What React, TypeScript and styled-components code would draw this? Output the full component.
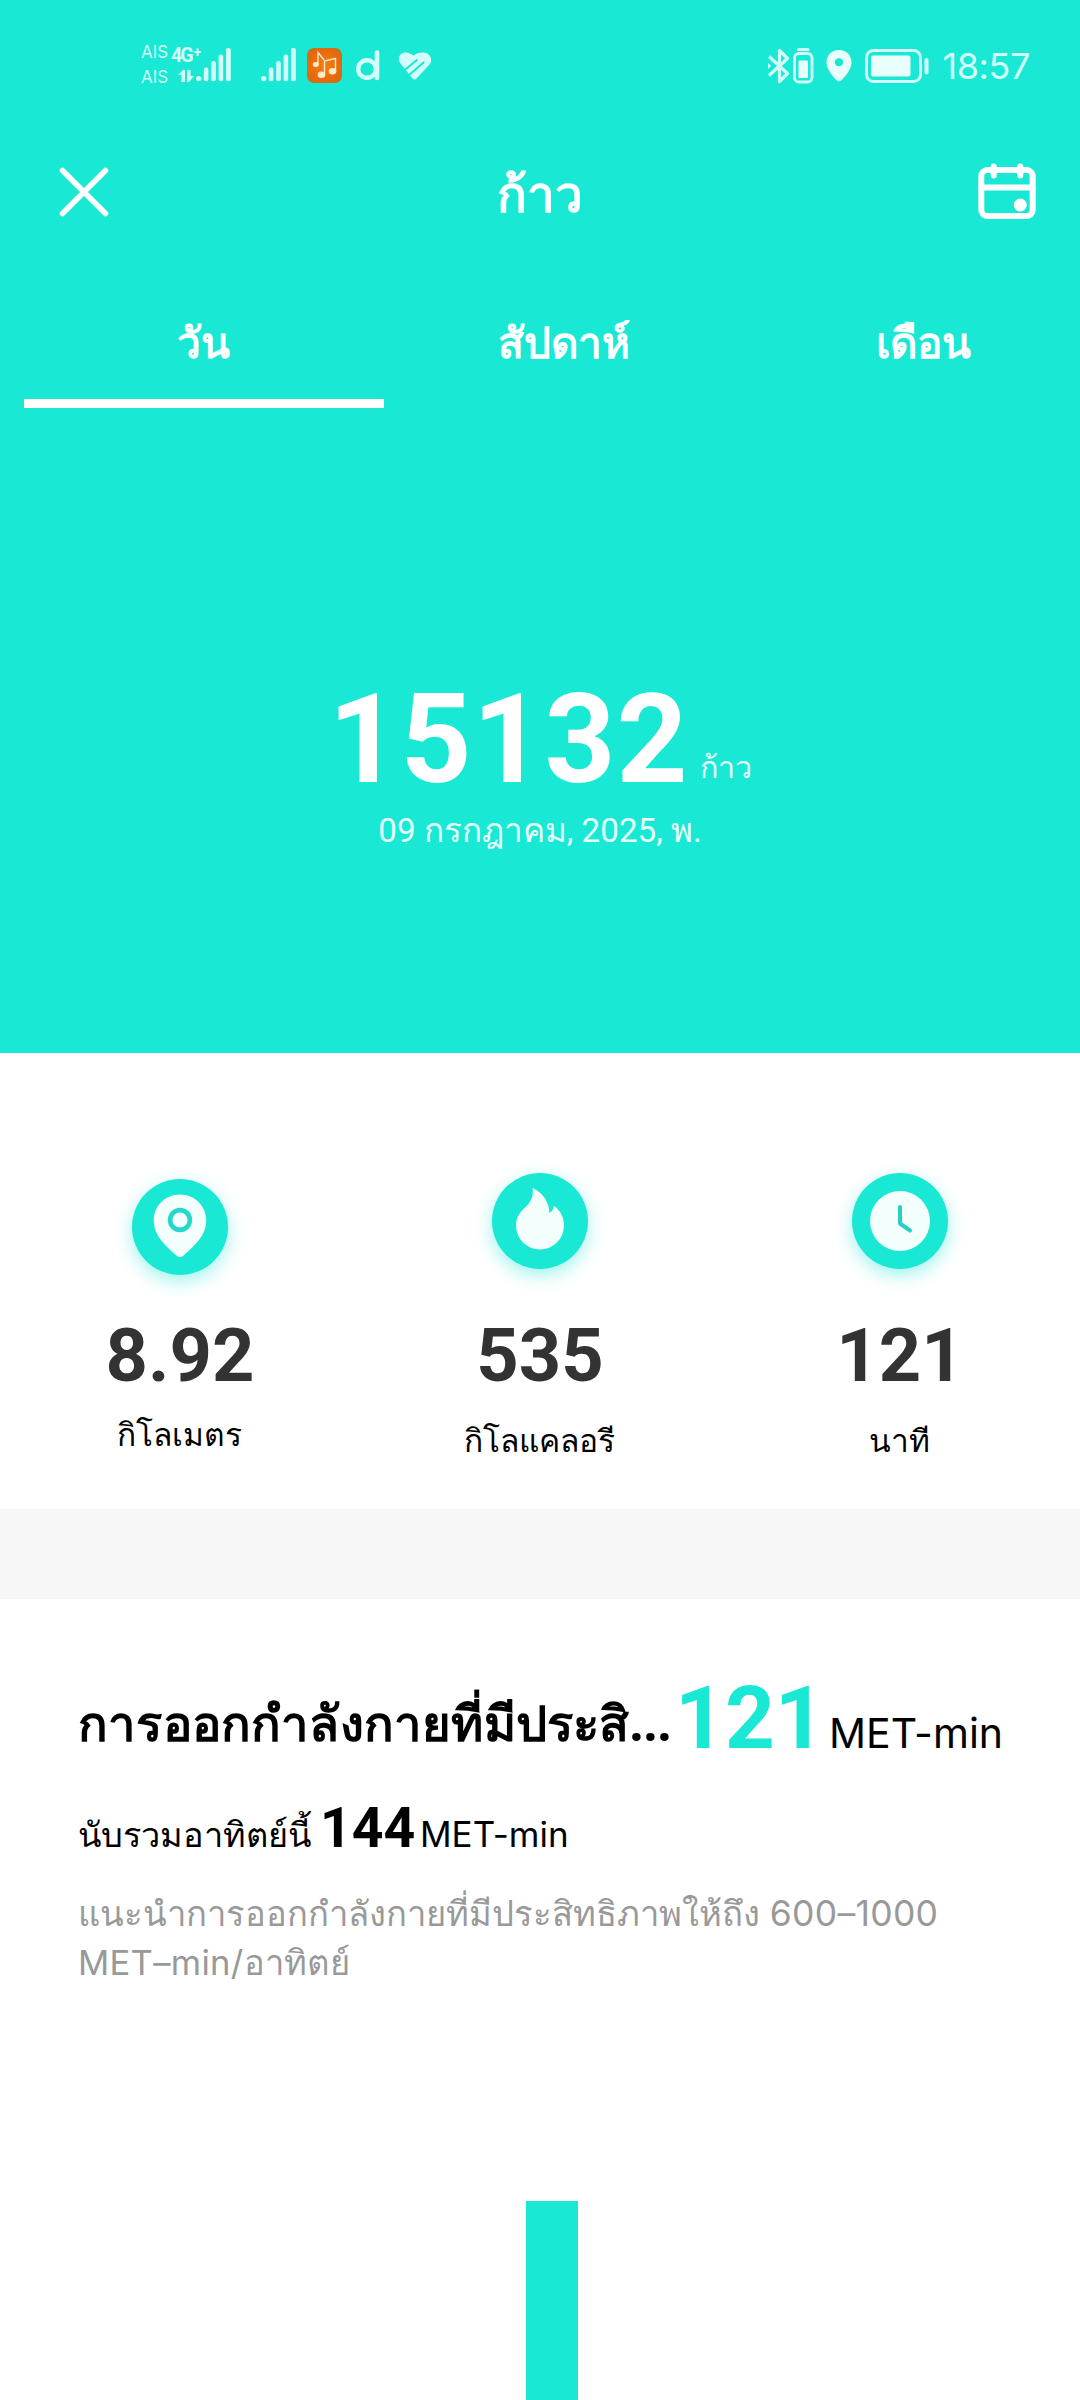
import React from 'react';
import styled, { createGlobalStyle } from 'styled-components';

const TEAL = '#18e8d4';
const THAI_BOLD = '"Noto Sans", sans-serif';
const NUMERIC = 'Roboto, sans-serif';
const BODY = 'Inter, sans-serif';

const GlobalStyle = createGlobalStyle`
  * { box-sizing: border-box; }
  body { margin: 0; background: #fff; }
  svg { display: block; flex: none; }
`;

const Screen = styled.main`
  display: flex;
  flex-direction: column;
  width: 1080px;
  height: 2400px;
  overflow: hidden;
  background: #fff;
  font-family: ${BODY};
  color: #000;
`;

const Hero = styled.section`
  display: flex;
  flex-direction: column;
  flex: none;
  height: 1053px;
  background: ${TEAL};
  color: #fff;
`;

/* ---------- status bar ---------- */

const StatusBar = styled.div`
  display: flex;
  justify-content: space-between;
  align-items: center;
  height: 131px;
  padding: 0 50px 0 141px;
  color: #d3fffa;
`;

const StatusGroup = styled.div`
  display: flex;
  align-items: center;
`;

const Carriers = styled.div`
  width: 30px;
  font-size: 17px;
  line-height: 25px;
  padding-bottom: 1px;
`;

const Network = styled.div`
  display: flex;
  flex-direction: column;
  width: 25px;
  height: 35px;
`;

const NetworkType = styled.div`
  display: flex;
  align-items: flex-start;
  font: 700 19.5px/16px Roboto, sans-serif;
  letter-spacing: -2px;
  white-space: nowrap;
`;

const NetworkPlus = styled.span`
  padding-left: 2px;
  font-size: 14px;
  line-height: 8px;
`;

const DataRow = styled.div`
  padding: 6px 0 0 7px;
`;

const Gap = styled.span<{ $w: number }>`
  flex: none;
  width: ${(p) => p.$w}px;
`;

const Clock = styled.time`
  font-size: 36px;
  line-height: 40px;
  letter-spacing: -0.4px;
`;

/* ---------- header and tabs ---------- */

const Header = styled.header`
  display: grid;
  grid-template-columns: 58px 1fr 58px;
  align-items: center;
  height: 123px;
  padding: 0 44px 0 58px;
`;

const Title = styled.h1`
  margin: 0;
  padding-right: 14px;
  text-align: center;
  font: 700 49.5px/64px ${THAI_BOLD};
`;

const Tabs = styled.nav`
  display: flex;
  flex: none;
  height: 154px;
  padding-left: 24px;
  overflow: hidden;
`;

const Tab = styled.div<{ $active?: boolean }>`
  flex: none;
  width: 360px;
  padding: 58px 1px 0 0;
  border-bottom: 9px solid ${(p) => (p.$active ? '#fff' : 'transparent')};
  text-align: center;
  font: 700 42.3px/60px ${THAI_BOLD};
`;

const StepCount = styled.div`
  display: flex;
  justify-content: center;
  align-items: flex-end;
  gap: 11px;
  margin-top: 267px;
`;

const StepNumber = styled.span`
  font: 700 123.8px/130px ${NUMERIC};
  letter-spacing: 1px;
`;

const StepUnit = styled.span`
  margin-bottom: 18px;
  font-size: 30.5px;
  line-height: 40px;
  color: #e2fffb;
`;

const DateLine = styled.div`
  margin-top: 4px;
  text-align: center;
  font: 400 33.2px/44px ${NUMERIC};
  color: #e2fffb;
`;

/* ---------- stats ---------- */

const Stats = styled.section`
  display: grid;
  grid-template-columns: repeat(3, 360px);
  flex: none;
  height: 456px;
`;

const Stat = styled.div<{ $shift: number }>`
  display: flex;
  flex-direction: column;
  align-items: center;
  padding-top: ${(p) => 120 + p.$shift}px;
`;

const Badge = styled.div`
  display: grid;
  place-items: center;
  width: 96px;
  height: 96px;
  border-radius: 50%;
  background: ${TEAL};
  box-shadow: 0 6px 18px rgba(24, 232, 212, 0.42);
`;

const StatValue = styled.div<{ $shift: number }>`
  margin-top: ${(p) => 47 - p.$shift}px;
  font: 700 74px/80px ${NUMERIC};
  color: #333;
`;

/* The distance label rides a few pixels above the other two. */
const StatLabel = styled.div<{ $shift: number }>`
  margin-top: ${(p) => 21 - p.$shift}px;
  padding-right: 1px;
  font-size: 31.7px;
  line-height: 48px;
`;

const Divider = styled.div`
  flex: none;
  height: 90px;
  background: #f7f7f7;
`;

/* ---------- effective exercise ---------- */

const Exercise = styled.section`
  display: flex;
  flex-direction: column;
  flex: 1;
  padding: 79px 76px 0 78px;
  white-space: nowrap;
`;

const ExerciseHead = styled.div`
  display: flex;
  align-items: flex-end;
`;

const ExerciseTitle = styled.h2`
  width: 597px;
  margin: 0 0 6px;
  font: 700 49px/60px ${THAI_BOLD};
  letter-spacing: 0.2px;
`;

const ExerciseValue = styled.span`
  width: 154px;
  font: 700 87px/80px ${NUMERIC};
  color: ${TEAL};
`;

const ExerciseUnit = styled.span`
  font-size: 41px;
  line-height: 50px;
`;

const WeekTotal = styled.div`
  display: flex;
  align-items: baseline;
  margin-top: 41px;
`;

const WeekLabel = styled.span`
  width: 242px;
  font-size: 34.3px;
  line-height: 40px;
`;

const WeekValue = styled.span`
  width: 100px;
  font: 700 55.3px/60px ${NUMERIC};
`;

const WeekUnit = styled.span`
  font-size: 35px;
  line-height: 40px;
`;

const Advice = styled.p`
  margin: 30px 0 0;
  font-size: 34.6px;
  line-height: 49px;
  color: #999;
`;

const AdviceRange = styled.span`
  font-size: 35.5px;
  line-height: 1;
  letter-spacing: 0.3px;
`;

const AdviceUnit = styled.span`
  letter-spacing: 0.3px;
`;

const Chart = styled.div`
  display: flex;
  flex: 1;
  align-items: flex-end;
  padding-left: 448px;
`;

const Bar = styled.div<{ $h: number }>`
  width: 52px;
  height: ${(p) => p.$h}px;
  background: ${TEAL};
`;

const CloseButton = styled.div`
  margin-top: -1px;
`;

const CalendarButton = styled.div`
  margin-top: -4px;
`;

/* ---------- icons ---------- */

const Signal = () => (
  <svg width="35" height="35" viewBox="0 0 35 35" fill="#d3fffa">
    <circle cx="2.7" cy="30.6" r="2.7" />
    <rect x="7.8" y="19.6" width="4.6" height="13.6" rx="2" />
    <rect x="15.2" y="13" width="4.6" height="20.2" rx="2" />
    <rect x="22.6" y="6.4" width="4.6" height="26.8" rx="2" />
    <rect x="30" y="0" width="4.8" height="33.2" rx="2" />
  </svg>
);

const DataArrows = () => (
  <svg width="16" height="12" viewBox="0 0 16 12" fill="#d3fffa">
    <path d="M0 5 5 0h2v12H3.500V5zM9 0h3.500v6H16l-5 6H9z" />
  </svg>
);

const MusicApp = () => (
  <svg width="35" height="35" viewBox="0 0 35 35">
    <defs>
      <radialGradient id="music" cx="50%" cy="50%" r="70%">
        <stop offset="0" stopColor="#f2800f" />
        <stop offset="0.65" stopColor="#e8680c" />
        <stop offset="1" stopColor="#b8741c" />
      </radialGradient>
    </defs>
    <rect width="35" height="35" rx="7" fill="url(#music)" />
    <g fill="#ffe9c9">
      <ellipse cx="8.800" cy="16.500" rx="3" ry="2.500" />
      <ellipse cx="14.500" cy="26.800" rx="3.800" ry="3.300" />
      <ellipse cx="25.500" cy="23.300" rx="3.800" ry="3.300" />
    </g>
    <path d="M11 16.500V4.500l6 7.500M17.500 26.500V13l11-2.500V23" fill="none" stroke="#ffe9c9" strokeWidth="1.400" />
  </svg>
);

const LetterLogo = () => (
  <svg width="25" height="31" viewBox="0 0 25 31" fill="none" stroke="#d3fffa">
    <circle cx="11" cy="19" r="8.800" strokeWidth="4.400" />
    <path d="M21 2.600v25.400" strokeWidth="4.600" strokeLinecap="round" />
  </svg>
);

const HeartLogo = () => (
  <svg width="34" height="28" viewBox="0 0 34 28" fill="none">
    <path
      d="M2.500 11.500C-1.500 6 2 .5 8 .5 11 .5 13.500 2 15.500 3.800 18 1.500 21 .5 25 .5 32 .5 35.500 7.500 31.500 12.500L18.500 26.500q-2 1.800-4 0z"
      fill="#d3fffa"
    />
    <path d="M6 18.500 19.500 7.500" stroke={TEAL} strokeWidth="2" />
    <path d="M10.500 23.500 25.500 10.500" stroke={TEAL} strokeWidth="2" strokeLinecap="round" />
  </svg>
);

const Bluetooth = () => (
  <svg width="22" height="36" viewBox="0 0 22 36" fill="none" stroke="#d3fffa" strokeWidth="3.200" strokeLinejoin="round">
    <path d="M1 8.500 19.500 25.500 11.500 33.500V2.500L19.500 10.500 1 27.500" />
    <path d="M0 15.500 2.500 18 0 20.500z" fill="#d3fffa" strokeWidth="1" />
  </svg>
);

const WatchBattery = () => (
  <svg width="21" height="36" viewBox="0 0 21 36">
    <path d="M5.500 1.500h9.500" stroke="#d3fffa" strokeWidth="3" strokeLinecap="round" />
    <rect x="1.500" y="5.500" width="17.500" height="28.500" rx="4.500" fill="none" stroke="#d3fffa" strokeWidth="2.800" />
    <rect x="5.500" y="12.500" width="9.500" height="17.500" rx="1" fill="#e8fffc" />
  </svg>
);

const StatusPin = () => (
  <svg width="26" height="32" viewBox="0 0 26 32">
    <path
      fill="#e8fffc"
      fillRule="evenodd"
      d="M13 0C5.600 0 .5 5.400.5 12.300.5 20.500 8 27.500 11 30.600q2 1.600 4 0C18 27.500 25.500 20.500 25.500 12.300 25.500 5.400 20.400 0 13 0zm0 8.200a4 4 0 1 1 0 8 4 4 0 0 1 0-8z"
    />
  </svg>
);

const Battery = () => (
  <svg width="64" height="34" viewBox="0 0 64 34">
    <rect x="1.500" y="1.500" width="54" height="31" rx="7" fill="none" stroke="#d3fffa" strokeWidth="3" />
    <rect x="6" y="6.500" width="39.500" height="21" rx="2" fill="#e8fffc" />
    <rect x="59.500" y="9" width="4" height="16.500" rx="2" fill="#d3fffa" />
  </svg>
);

const CloseIcon = () => (
  <svg width="52" height="52" viewBox="0 0 52 52" stroke="#fff" strokeWidth="5.500" strokeLinecap="round">
    <path d="M4.500 4.500 47.500 47.500M47.500 4.500 4.500 47.500" />
  </svg>
);

const CalendarIcon = () => (
  <svg width="58" height="58" viewBox="0 0 58 58" fill="none" stroke="#fff" strokeWidth="6" strokeLinecap="round">
    <rect x="3.300" y="8" width="51.400" height="46" rx="6" />
    <path d="M3.300 25.500h51.400M15.700 4.500v9M42.300 4.500v9" />
    <circle cx="42.300" cy="43" r="6.500" fill="#fff" stroke="none" />
  </svg>
);

const DistanceIcon = () => (
  <svg width="96" height="96" viewBox="0 0 96 96">
    <path
      d="M48 15.500C33.500 15.500 21.800 26.500 21.800 41.500 21.800 57 34 67 44.500 76.500q3.500 3 7 0C62 67 74.200 57 74.200 41.500 74.200 26.500 62.500 15.500 48 15.500z"
      fill="#f2fffd"
    />
    <circle cx="48" cy="41" r="9.900" fill="none" stroke="#26d8ca" strokeWidth="4.600" />
  </svg>
);

const FlameIcon = () => (
  <svg width="96" height="96" viewBox="0 0 96 96">
    <path
      d="M40.500 15C51 19.500 57 29 57.500 40q3.500-2 4.500-7.300C68.500 37.500 72 44.500 72 52.500A24 24 0 0 1 24 52.500C24 46 27 40 32 35.500 38.500 30 42 23.500 40.500 15z"
      fill="#f2fffd"
    />
  </svg>
);

const ClockIcon = () => (
  <svg width="96" height="96" viewBox="0 0 96 96">
    <circle cx="48" cy="48" r="30" fill="#f2fffd" />
    <path d="M48 34v16.500l10 7" fill="none" stroke="#26d0c2" strokeWidth="4" strokeLinecap="round" strokeLinejoin="round" />
  </svg>
);

const stats = [
  { value: '8.92', label: 'กิโลเมตร', icon: <DistanceIcon />, shift: 6 },
  { value: '535', label: 'กิโลแคลอรี', icon: <FlameIcon />, shift: 0 },
  { value: '121', label: 'นาที', icon: <ClockIcon />, shift: 0 },
];

export default function App() {
  return (
    <Screen>
      <GlobalStyle />
      <Hero>
        <StatusBar>
          <StatusGroup>
            <Carriers>
              <div>AIS</div>
              <div>AIS</div>
            </Carriers>
            <Network>
              <NetworkType>
                4G<NetworkPlus>+</NetworkPlus>
              </NetworkType>
              <DataRow>
                <DataArrows />
              </DataRow>
            </Network>
            <Signal />
            <Gap $w={30} />
            <Signal />
            <Gap $w={11} />
            <MusicApp />
            <Gap $w={14} />
            <LetterLogo />
            <Gap $w={17} />
            <HeartLogo />
          </StatusGroup>
          <StatusGroup>
            <Bluetooth />
            <Gap $w={3} />
            <WatchBattery />
            <Gap $w={12} />
            <StatusPin />
            <Gap $w={13} />
            <Battery />
            <Gap $w={13} />
            <Clock>18:57</Clock>
          </StatusGroup>
        </StatusBar>
        <Header>
          <CloseButton>
            <CloseIcon />
          </CloseButton>
          <Title>ก้าว</Title>
          <CalendarButton>
            <CalendarIcon />
          </CalendarButton>
        </Header>
        <Tabs>
          <Tab $active>วัน</Tab>
          <Tab>สัปดาห์</Tab>
          <Tab>เดือน</Tab>
        </Tabs>
        <StepCount>
          <StepNumber>15132</StepNumber>
          <StepUnit>ก้าว</StepUnit>
        </StepCount>
        <DateLine>09 กรกฎาคม, 2025, พ.</DateLine>
      </Hero>
      <Stats>
        {stats.map((s) => (
          <Stat key={s.label} $shift={s.shift}>
            <Badge>{s.icon}</Badge>
            <StatValue $shift={s.shift}>{s.value}</StatValue>
            <StatLabel $shift={s.shift}>{s.label}</StatLabel>
          </Stat>
        ))}
      </Stats>
      <Divider />
      <Exercise>
        <ExerciseHead>
          <ExerciseTitle>การออกกำลังกายที่มีประสิ...</ExerciseTitle>
          <ExerciseValue>121</ExerciseValue>
          <ExerciseUnit>MET-min</ExerciseUnit>
        </ExerciseHead>
        <WeekTotal>
          <WeekLabel>นับรวมอาทิตย์นี้</WeekLabel>
          <WeekValue>144</WeekValue>
          <WeekUnit>MET-min</WeekUnit>
        </WeekTotal>
        <Advice>
          แนะนำการออกกำลังกายที่มีประสิทธิภาพให้ถึง <AdviceRange>600–1000</AdviceRange>
          <br />
          <AdviceUnit>MET–min/อาทิตย์</AdviceUnit>
        </Advice>
        <Chart>
          <Bar $h={199} />
        </Chart>
      </Exercise>
    </Screen>
  );
}
